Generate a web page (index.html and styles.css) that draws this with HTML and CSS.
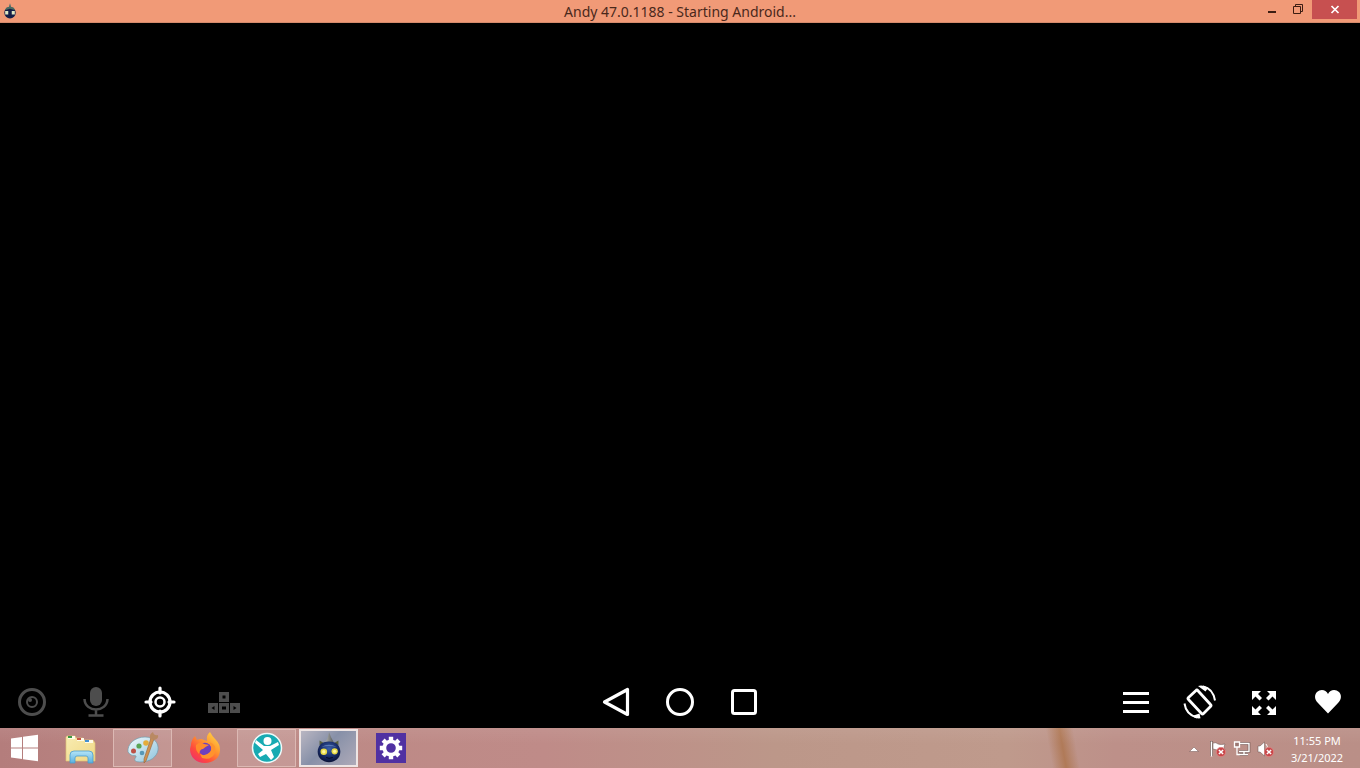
FILE: index.html
```html
<!DOCTYPE html>
<html lang="en">
<head>
<meta charset="utf-8">
<title>Andy 47.0.1188 - Starting Android...</title>
<link rel="stylesheet" href="styles.css">
</head>
<body>
<svg class="defs" aria-hidden="true">
  <defs>
    <radialGradient id="body" cx=".5" cy=".35" r=".65"><stop offset="0" stop-color="#3a5fa6"/><stop offset=".6" stop-color="#182c68"/><stop offset="1" stop-color="#0a1236"/></radialGradient>
    <linearGradient id="horn" x1="0" x2="1"><stop offset="0" stop-color="#b3b4b0"/><stop offset="1" stop-color="#54585a"/></linearGradient>
    <linearGradient id="folder" x1="0" y1="0" x2="1" y2="1"><stop offset="0" stop-color="#f8ecb2"/><stop offset="1" stop-color="#f0d884"/></linearGradient>
    <linearGradient id="stand" x1="0" y1="0" x2="0" y2="1"><stop offset="0" stop-color="#b5e5f7"/><stop offset="1" stop-color="#5ab0e0"/></linearGradient>
    <linearGradient id="flame" x1="1" y1="0" x2=".2" y2="1"><stop offset="0" stop-color="#ffe34a"/><stop offset=".45" stop-color="#ff9430"/><stop offset=".75" stop-color="#ff4b3c"/><stop offset="1" stop-color="#ef2f6a"/></linearGradient>
    <linearGradient id="palette" x1="0" y1="0" x2="1" y2="1"><stop offset="0" stop-color="#f2fafc"/><stop offset="1" stop-color="#8ec4dd"/></linearGradient>
    <symbol id="andy" viewBox="0 0 32 36">
      <path d="M12 12 Q15 8 16 1 Q18 7 21 12Z" fill="url(#horn)"/>
      <path d="M6 15 6 10 11 13M26 15 26 10 21 13" fill="#59613f"/>
      <path d="M16 11C24 11 28 16 28 22C28 29 22 33 16 33C10 33 4 29 4 22C4 16 8 11 16 11Z" fill="url(#body)"/>
      <path d="M8 17Q16 12 24 17Q16 15 8 17" fill="#6d8ec8" opacity=".7"/>
      <circle cx="10.500" cy="22" r="3.500" fill="#eadb45"/><circle cx="22" cy="21.500" r="3.300" fill="#eadb45"/>
      <circle cx="10.500" cy="22" r="1.800" fill="#fff6a0"/><circle cx="22" cy="21.500" r="1.700" fill="#fff6a0"/>
      <path d="M13 28Q16 30 20 28" fill="none" stroke="#050a22"/>
    </symbol>
    <symbol id="error" viewBox="0 0 9 9"><circle cx="4.500" cy="4.500" r="4.200" fill="#c9474a" stroke="#e58b88" stroke-width=".6"/><path d="M2.600 2.600 6.400 6.400M6.400 2.600 2.600 6.400" stroke="#fff" stroke-width="1.300"/></symbol>
  </defs>
</svg>
<div class="desktop">
  <header class="titlebar">
    <svg class="app-icon" viewBox="0 0 16 18"><path d="M6 6 8 0 10 6" fill="#53716c"/><circle cx="8" cy="11" r="6.500" fill="#151e48"/><path d="M2 8 4 5 8 4 12 5 14 8 8 6.500" fill="#4a6c62"/><rect x="2.500" y="9" width="3.500" height="4" fill="#dfe8c4"/><rect x="10" y="9" width="3.500" height="4" fill="#dfe8c4"/></svg>
    <h1 class="title">Andy 47.0.1188 - Starting Android...</h1>
    <div class="window-buttons">
      <button class="window-button" aria-label="Minimize"><svg width="26" height="19"><path d="M8 12h8" stroke="#3c1d12" stroke-width="2"/></svg></button>
      <button class="window-button" aria-label="Restore"><svg width="26" height="19"><path d="M7.500 6.500h7v7h-7zM9.500 6V4.500h7v7H15" fill="none" stroke="#3c1d12"/></svg></button>
      <button class="window-button close" aria-label="Close"><svg width="45" height="19"><path d="M19.500 6l7 7M26.500 6l-7 7" stroke="#fff" stroke-width="1.700"/></svg></button>
    </div>
  </header>
  <main class="screen"></main>
  <nav class="controls" aria-label="Emulator controls">
    <div class="group">
      <button class="control dim" aria-label="Camera"><svg viewBox="0 0 36 36"><g fill="none" stroke="currentColor"><circle cx="18" cy="18" r="12.500" stroke-width="3"/><circle cx="18" cy="18" r="5" stroke-width="2"/></g><circle cx="16" cy="16" r="2" fill="currentColor"/></svg></button>
      <button class="control dim" aria-label="Microphone"><svg viewBox="0 0 36 36"><rect x="12" y="3" width="12" height="19" rx="6" fill="currentColor"/><path d="M6.500 15C7 29 29 29 29.500 15M18 25v7M10.500 31.500h15" fill="none" stroke="currentColor" stroke-width="2.500"/></svg></button>
      <button class="control" aria-label="Location"><svg viewBox="0 0 36 36"><g fill="none" stroke="currentColor" stroke-width="3.200"><circle cx="18" cy="18" r="10"/><circle cx="18" cy="18" r="4.500" stroke-width="2.500"/><path d="M18 4v5M18 27v5M4 18h5M27 18h5" stroke-linecap="round"/></g></svg></button>
      <button class="control dim" aria-label="Arrow keys"><svg viewBox="0 0 36 36"><path fill="currentColor" fill-rule="evenodd" d="M13 8h10v10H13zM16.500 11.500v3h3v-3zM2 19h10v10H2zM5.500 24l3 2v-4zM13 19h10v10H13zM16 22.500v3h4v-3zM24 19h10v10H24zM30.500 24l-3-2v4z"/></svg></button>
    </div>
    <div class="group">
      <button class="control" aria-label="Back"><svg viewBox="0 0 36 36"><path d="M29.500 5.500V30.500L6.500 18Z" fill="none" stroke="currentColor" stroke-width="3.200" stroke-linejoin="round"/></svg></button>
      <button class="control" aria-label="Home"><svg viewBox="0 0 36 36"><circle cx="18" cy="18" r="12.500" fill="none" stroke="currentColor" stroke-width="3"/></svg></button>
      <button class="control" aria-label="Recent apps"><svg viewBox="0 0 36 36"><rect x="6.500" y="6.500" width="23" height="23" rx="2" fill="none" stroke="currentColor" stroke-width="3"/></svg></button>
    </div>
    <div class="group end">
      <button class="control" aria-label="Menu"><svg viewBox="0 0 36 36"><path d="M5 9.500h26M5 18.500h26M5 27.500h26" stroke="currentColor" stroke-width="3"/></svg></button>
      <button class="control" aria-label="Rotate"><svg viewBox="0 0 36 36"><path d="M15.500 6.200 28.500 20.500Q29.500 21.500 28.500 22.500L21.500 29.500Q20.500 30.500 19.500 29.500L6.500 15.500Q5.500 14.500 6.500 13.500L14 6.500Q15 5.500 15.500 6.200Z" fill="none" stroke="currentColor" stroke-width="2.800"/><path d="M21 2.500Q31 4.500 33 16.500M2.500 19.500Q4 30.500 15 33.500" fill="none" stroke="currentColor" stroke-width="2"/><path d="M16 2 Q21 .5 26 4L23.500 7.500ZM18.500 34.300 Q13 35 10 32L17.500 29.500Z" fill="currentColor"/></svg></button>
      <button class="control" aria-label="Full screen"><svg viewBox="0 0 36 36"><path d="M6 7h9l-3 3 4 4-2.500 2.500-4-4L6 16zM30 7h-9l3 3-4 4 2.500 2.500 4-4L30 16zM6 31h9l-3-3 4-4-2.500-2.500-4 4L6 22zM30 31h-9l3-3-4-4 2.500-2.500 4 4L30 22z" fill="currentColor"/></svg></button>
      <button class="control" aria-label="Like"><svg viewBox="0 0 36 36"><path d="M18 29.500 8 19C4 15 4.500 10.500 7 8C10.500 4.500 16 5.500 18 10C20 5.500 25.500 4.500 29 8C31.500 10.500 32 15 28 19Z" fill="currentColor"/></svg></button>
    </div>
  </nav>
  <footer class="taskbar">
    <div class="tasks">
      <button class="start" aria-label="Start"><svg width="28" height="28" viewBox="0 0 28 28"><path d="M1 4.500 12 3v10.500H1zM13 2.800 28 .8v12.700H13zM1 14.500h11V25L1 23.500zM13 14.500h15v12.700L13 25.200z" fill="#fff"/></svg></button>
      <button class="task" aria-label="File Explorer"><svg width="32" height="32" viewBox="0 0 32 32"><path d="M1 5 2 4h8l1 2h7l1 2h9l2 3v18H1z" fill="url(#folder)" stroke="#dfc377" stroke-width=".7"/><path d="M3 4h7v3H3zM12 6h7v3h-7zM20 8h8v3h-8z" fill="#fffbe8"/><path d="M3 4h4v2H3z" fill="#3b9845"/><path d="M12 6h4v2h-4z" fill="#c95444"/><path d="M20 8h4v2h-4z" fill="#438fd0"/><path d="M5 31V23q0-4 4-4h15q4 0 4 4v8h-5v-5q0-2-2-2h-9q-2 0-2 2v5z" fill="url(#stand)" stroke="#4a9ccb" stroke-width=".8"/></svg></button>
      <button class="task open" aria-label="Paint"><svg width="32" height="32" viewBox="0 0 32 32"><path d="M1 20C0 12 8 5 18 5C27 5 32 11 31 18C30 25 23 30 14 30C9 30 6 29 9 25C10 22 5 26 1 20Z" fill="url(#palette)" stroke="#709eae" stroke-width=".7"/><circle cx="6.500" cy="19" r="2.500" fill="#bd5146"/><circle cx="12" cy="14" r="2.600" fill="#58a455"/><circle cx="19" cy="11" r="2.800" fill="#e5ac3b"/><circle cx="15" cy="21" r="2.300" fill="#5798b7"/><path d="M27 7 19 29l-2 2v-4l7-21z" fill="#d0924f" stroke="#94643f" stroke-width=".6"/><path d="M23 7Q22 2 26 0Q27 4 31 3Q32 7 27 8z" fill="#b98963"/></svg></button>
      <button class="task" aria-label="Firefox"><svg width="32" height="32" viewBox="0 0 32 32"><path d="M2 13Q2 8 6 4L8 8Q12 6 15 8L18 9Q17 3 21 0Q23 4 27 8Q31 12 31 18C31 26 24 31 16 31C7 31 1 25 1 17Z" fill="url(#flame)"/><circle cx="16" cy="17" r="6.300" fill="#6f40bf"/><path d="M7 13Q11 9 15 12L20 13Q16 15 14 17Q11 17 10 22Q6 18 7 13" fill="#ff8b2c"/><path d="M11 22Q16 25 21 20Q24 15 20 10Q28 12 26 21Q22 29 13 26Z" fill="#ff932d"/></svg></button>
      <button class="task open" aria-label="Messenger"><svg width="32" height="32" viewBox="0 0 32 32"><circle cx="16" cy="16" r="14.500" fill="#17aab2" stroke="#effafa" stroke-width="1.500"/><circle cx="16.500" cy="9" r="4" fill="#fff"/><path d="M5 8 13 14H19L27 10 28 13 20 18 23 25 20 28 15 22 9 25 7 22 12 18 4 11Z" fill="#fff"/></svg></button>
      <button class="task open active" aria-label="Andy"><svg width="32" height="34"><use href="#andy"/></svg></button>
      <button class="task" aria-label="Settings"><svg width="30" height="30" viewBox="0 0 30 30"><path d="M0 0h30v30H0z" fill="#5031a2"/><circle cx="15" cy="15" r="6.700" fill="none" stroke="#fff" stroke-width="3.800"/><g stroke="#fff" stroke-width="4.400"><path d="M15 3.800v4M15 22.200v4M3.800 15h4M22.200 15h4"/><path d="M7.100 7.100 10 10M20 20l2.900 2.900M7.100 22.900 10 20M20 10l2.900-2.900"/></g></svg></button>
    </div>
    <div class="tray">
      <button class="tray-button" aria-label="Show hidden icons"><svg viewBox="0 0 18 18"><path d="M4.500 11.500 9 7l4.500 4.500z" fill="#fff" stroke="#6e5351" stroke-width=".5"/></svg></button>
      <button class="tray-button" aria-label="Action Center"><svg viewBox="0 0 18 18"><path d="M2.500 1v15" stroke="#65504c" stroke-width="2.600"/><path d="M2.500 1.500v15" stroke="#fff" stroke-width="1.500"/><path d="M4 3q3-1 5 1 3 1 7 0l-1 3 1 3q-5 1-8 0L4 9z" fill="#fff" stroke="#65504c" stroke-width=".5"/><use href="#error" x="7" y="7" width="10" height="10"/></svg></button>
      <button class="tray-button" aria-label="Network"><svg viewBox="0 0 18 18"><path d="M6 3.500h10v8H6M11 12v3M6 14.500h9" fill="none" stroke="#6b524e" stroke-width="2.600"/><path d="M6 3.500h10v8H6M11 12v3M6 14.500h9" fill="none" stroke="#fff" stroke-width="1.400"/><path d="M1.500 2h5v5h-5zM4 7v7.500h3" fill="#9b7772" stroke="#fff" stroke-width="1.300"/></svg></button>
      <button class="tray-button" aria-label="Volume muted"><svg viewBox="0 0 18 18"><path d="M1 6h2l4.500-4v14L3 12H1z" fill="#fff" stroke="#65504c" stroke-width=".5"/><path d="M9 4q2 2 1 5" fill="none" stroke="#fff"/><use href="#error" x="7" y="7" width="10" height="10"/></svg></button>
      <button class="clock"><time>11:55 PM</time><time datetime="2022-03-21">3/21/2022</time></button>
    </div>
  </footer>
</div>
</body>
</html>
```
FILE: styles.css
```css
* { box-sizing: border-box; }
body { margin: 0; background: #000; font-family: "Noto Sans", "Open Sans", sans-serif; }
button { border: 0; padding: 0; background: none; color: inherit; font: inherit; }
svg { display: block; }
.defs { position: absolute; width: 0; height: 0; }
.desktop { min-height: 100vh; display: flex; flex-direction: column; }

.titlebar { display: grid; grid-template-columns: 1fr auto 1fr; height: 23px; background: #f19a77; border-bottom: 1px solid #d58a6c; }
.app-icon { width: 14px; height: 16px; margin: 3px; }
.title { margin: 0; font-size: 14px; line-height: 23px; font-weight: 400; color: #4a281b; }
.window-buttons { display: flex; justify-self: end; align-items: flex-start; padding-right: 3px; }
.close { background: #c75050; }

.screen { flex: 1; }
.controls { display: grid; grid-template-columns: 1fr auto 1fr; height: 52px; color: #fff; }
.group { display: flex; }
.end { justify-content: flex-end; }
.control { width: 64px; display: grid; place-items: center; }
.control svg { width: 36px; height: 36px; }
.dim { color: #4d4d4d; }

.taskbar {
  display: flex; justify-content: space-between; height: 40px;
  background:
    linear-gradient(#ffffff10, transparent 40%),
    linear-gradient(80deg, transparent 77%, #b07a58 78%, #b07a58 78%, transparent 79%),
    linear-gradient(90deg, #b47d7c, #bc8985 16%, #bf8b88 40%, #bc9789 57%, #bf9a8c 74%, #bd9089 82%, #ba8f87 100%);
}
.tasks { display: flex; gap: 3px; padding-block: 1px; }
.start { width: 48px; display: grid; place-items: center; }
.task { width: 59px; display: grid; place-items: center; border: 1px solid transparent; }
.open { border-color: #dcb9b4; background: #ffffff22; }
.active { border: 2px solid #eee5e4; background: linear-gradient(135deg, #b9b6c2, #8790a8 45%, #aeaab8); }
.tray { display: flex; padding-right: 4px; color: #fff; }
.tray-button { width: 24px; display: grid; place-items: center; padding-top: 2px; }
.tray-button svg { width: 18px; height: 18px; }
.clock { width: 78px; display: flex; flex-direction: column; align-items: center; justify-content: center; padding-top: 2px; font-size: 11px; line-height: 17px; }
```
